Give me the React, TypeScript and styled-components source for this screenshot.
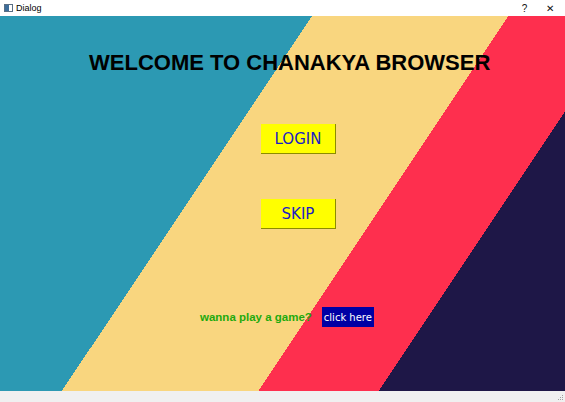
import styled, { createGlobalStyle } from 'styled-components';

const GlobalStyle = createGlobalStyle`
  html, body {
    margin: 0;
    padding: 0;
    width: 565px;
    height: 402px;
    overflow: hidden;
  }
  #root {
    height: 100%;
  }
`;

const Window = styled.div`
  width: 565px;
  height: 402px;
  display: flex;
  flex-direction: column;
  font-family: Tahoma, "DejaVu Sans", sans-serif;
  background: #f0f0f0;
`;

const TitleBar = styled.div`
  height: 16px;
  flex: none;
  background: #ffffff;
  display: flex;
  align-items: center;
  padding: 0 3px 0 4px;
  font-family: "Liberation Sans", Arial, sans-serif;
  font-size: 9px;
  color: #000;
`;

const TitleText = styled.span`
  margin-left: 3px;
  flex: 1;
`;

const TitleAction = styled.span`
  width: 25px;
  text-align: center;
  font-size: 10px;
  color: #111;
`;

const Canvas = styled.div`
  flex: 1;
  display: flex;
  flex-direction: column;
  background: linear-gradient(
    123.7deg,
    #2c99b3 0px,
    #2c99b3 259.5px,
    #f9d67f 259.5px,
    #f9d67f 423px,
    #fe2f4e 423px,
    #fe2f4e 523px,
    #1e1747 523px
  );
`;

const Heading = styled.h1`
  margin: 32px 0 0 89px;
  font-family: "Liberation Sans", Arial, sans-serif;
  font-weight: bold;
  font-size: 22px;
  line-height: 30px;
  color: #000;
  white-space: nowrap;
`;

const RaisedButton = styled.button<{ $top: number }>`
  margin: ${p => p.$top}px 0 0 261px;
  width: 75px;
  height: 30px;
  padding: 0;
  background: #ffff00;
  border: none;
  border-right: 1px solid #8c8c00;
  border-bottom: 1px solid #8c8c00;
  color: #1c1cc4;
  font-family: "DejaVu Sans", Tahoma, sans-serif;
  font-size: 15px;
  cursor: pointer;
`;

const GameRow = styled.div`
  margin: 78px 0 0 200px;
  display: flex;
  align-items: center;
  gap: 10px;
`;

const GameText = styled.span`
  color: #1faa0e;
  font-family: "Liberation Sans", Arial, sans-serif;
  font-weight: bold;
  font-size: 11.5px;
`;

const LinkButton = styled.button`
  width: 52px;
  height: 20px;
  padding: 0;
  border: none;
  background: #0000a4;
  color: #ffffff;
  font-family: "DejaVu Sans", Tahoma, sans-serif;
  font-size: 10px;
  cursor: pointer;
`;

const StatusBar = styled.div`
  height: 11px;
  flex: none;
  background: #f0f0f0;
  display: flex;
  justify-content: flex-end;
  align-items: flex-end;
  padding: 0 1px 1px 0;
  box-sizing: border-box;
`;

function WindowIcon() {
  return (
    <svg width="9" height="8" viewBox="0 0 9 8">
      <rect x="0.5" y="0.5" width="8" height="7" fill="#fff" stroke="#5a6f84" />
      <rect x="1" y="1" width="4" height="6" fill="#3c6d9a" />
    </svg>
  );
}

function SizeGrip() {
  return (
    <svg width="6" height="6" viewBox="0 0 6 6">
      <rect x="4" y="0" width="1" height="1" fill="#a0a0a0" />
      <rect x="2" y="2" width="1" height="1" fill="#a0a0a0" />
      <rect x="4" y="2" width="1" height="1" fill="#a0a0a0" />
      <rect x="0" y="4" width="1" height="1" fill="#a0a0a0" />
      <rect x="2" y="4" width="1" height="1" fill="#a0a0a0" />
      <rect x="4" y="4" width="1" height="1" fill="#a0a0a0" />
    </svg>
  );
}

export default function App() {
  return (
    <>
      <GlobalStyle />
      <Window>
        <TitleBar>
          <WindowIcon />
          <TitleText>Dialog</TitleText>
          <TitleAction>?</TitleAction>
          <TitleAction>✕</TitleAction>
        </TitleBar>
        <Canvas>
          <Heading>WELCOME TO CHANAKYA BROWSER</Heading>
          <RaisedButton $top={46}>LOGIN</RaisedButton>
          <RaisedButton $top={45}>SKIP</RaisedButton>
          <GameRow>
            <GameText>wanna play a game?</GameText>
            <LinkButton>click here</LinkButton>
          </GameRow>
        </Canvas>
        <StatusBar>
          <SizeGrip />
        </StatusBar>
      </Window>
    </>
  );
}
